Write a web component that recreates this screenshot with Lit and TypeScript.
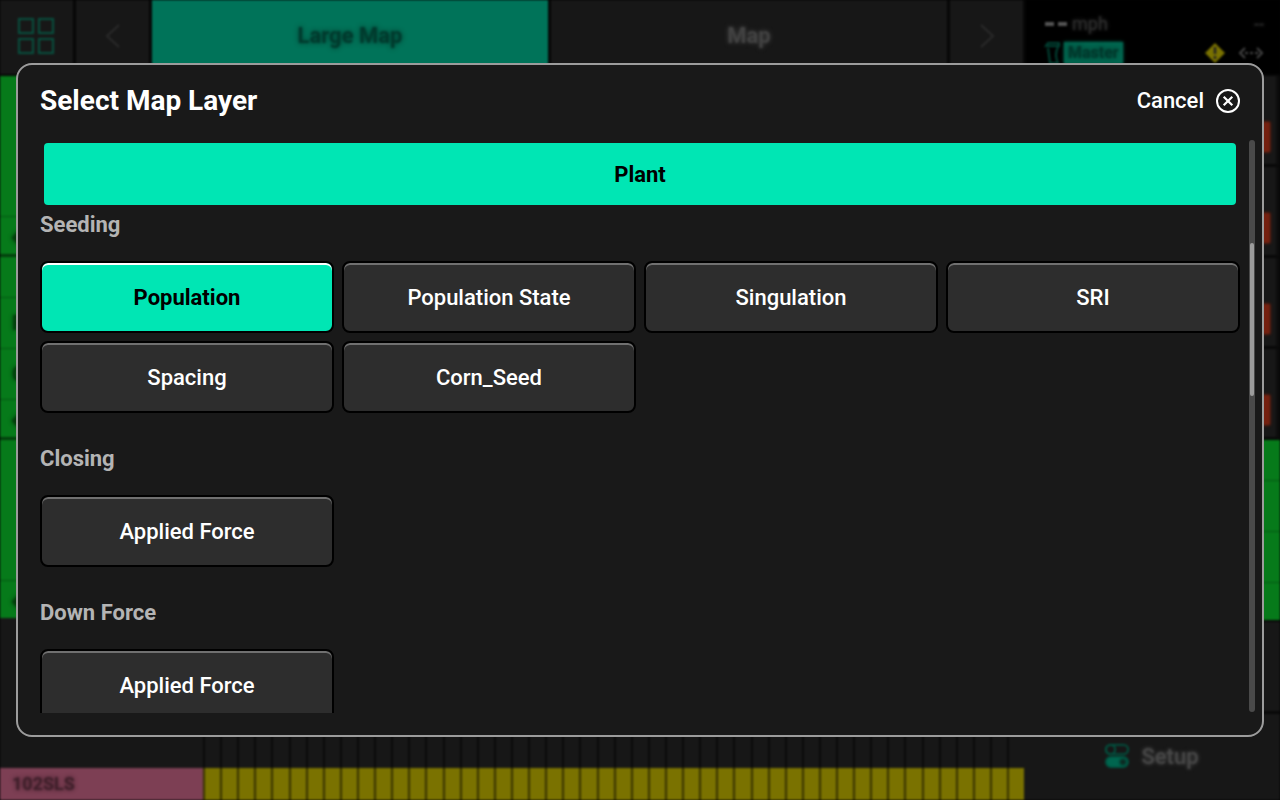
import { LitElement, html, css } from "lit";
import { customElement, state } from "lit/decorators.js";

interface LayerGroup {
  name: string;
  layers: string[];
}

const GROUPS: LayerGroup[] = [
  { name: "Seeding", layers: ["Population", "Population State", "Singulation", "SRI", "Spacing", "Corn_Seed"] },
  { name: "Closing", layers: ["Applied Force"] },
  { name: "Down Force", layers: ["Applied Force"] },
];

const chevron = (points: string) => html`
  <svg width="20" height="28" viewBox="0 0 20 28" fill="none" stroke="#2a2a2a" stroke-width="2">
    <polyline points=${points}></polyline>
  </svg>
`;

@customElement("monitor-backdrop")
export class MonitorBackdrop extends LitElement {
  static styles = css`
    :host {
      display: flex;
      flex-direction: column;
      height: 100%;
      background: #060606;
      color: #3c3c3c;
      filter: blur(1px);
      text-shadow: 0 0 4px currentColor;
    }
    button {
      font: inherit;
      color: inherit;
      text-shadow: inherit;
      border: 0;
      padding: 0;
      margin: 0;
      background: #171717;
    }
    .top {
      display: flex;
      height: 74px;
      gap: 3px;
      margin-bottom: 2px;
    }
    .tabs {
      flex: 1;
      display: flex;
      gap: 3px;
    }
    .square {
      width: 73px;
      padding-bottom: 2px;
      display: grid;
      place-items: center;
    }
    .tab {
      flex: 1;
      font-size: 22px;
      line-height: 26px;
      font-weight: 700;
      color: #424242;
      padding-bottom: 2px;
      text-shadow: 0 0 5px currentColor;
    }
    .tab.on {
      background: #007359;
      color: #003a2d;
    }
    .status {
      width: 254px;
      background: #000;
      box-sizing: border-box;
      padding: 14px 16px 0 18px;
      display: flex;
      flex-direction: column;
      gap: 8px;
    }
    .line {
      display: flex;
      justify-content: space-between;
      align-items: center;
      font-size: 18px;
      line-height: 20px;
      color: #2e2e2e;
    }
    .speed {
      display: flex;
      align-items: center;
      gap: 4px;
    }
    .badge {
      background: #00664f;
      box-shadow: 0 0 3px #00664f;
      color: #00382c;
      font-size: 16px;
      font-weight: 700;
      line-height: 22px;
      padding: 0 4px;
    }
    .marks {
      display: flex;
      align-items: center;
      gap: 12px;
    }
    .middle {
      flex: 1;
      display: flex;
      min-height: 0;
    }
    .field {
      flex: 1;
      display: flex;
      flex-direction: column;
      background: #171717;
    }
    .rail {
      flex: 1;
    }
    .zone {
      background: #067a1a;
      border-bottom: 3px solid #033d0c;
    }
    .zone:last-child {
      border-bottom: 0;
    }
    .cell {
      border-bottom: 1px solid #045612;
      box-sizing: border-box;
      color: #033d0c;
      padding-left: 12px;
      display: flex;
      align-items: center;
      font-size: 20px;
      font-weight: 700;
    }
    .cell:last-child {
      border-bottom: 0;
    }
    .h141 { height: 141px; }
    .h51 { height: 51px; }
    .h41 { height: 41px; }
    .h37 { height: 37px; }
    .strips {
      display: flex;
      height: 80px;
    }
    .hybrid {
      width: 203px;
      display: flex;
      flex-direction: column;
      justify-content: flex-end;
    }
    .tag {
      background: #7d3f54;
      color: #3f1f2a;
      font-size: 18px;
      font-weight: 700;
      line-height: 32px;
      padding-left: 12px;
    }
    .rows {
      flex: 1;
      display: flex;
    }
    .row {
      flex: 1;
      background: linear-gradient(#171717 48px, #7a7200 48px);
      border-left: 2px solid #0000008c;
      background-clip: border-box;
    }
    .side {
      width: 256px;
      display: flex;
      flex-direction: column;
    }
    .gauge {
      height: 91px;
      background: #171717;
      border-bottom: 3px solid #080808;
      border-right: 4px solid #0c0c0c;
      box-sizing: border-box;
      display: flex;
      align-items: flex-end;
      justify-content: flex-end;
      padding: 0 6px 12px 0;
    }
    .bar {
      width: 40px;
      height: 30px;
      background: #74200f;
      box-shadow: 0 0 3px #74200f;
    }
    .blank {
      flex: 1;
      background: #171717;
      border-top: 2px solid #080808;
      border-bottom: 3px solid #080808;
    }
    .setup {
      height: 86px;
      padding-bottom: 2px;
      display: flex;
      align-items: center;
      justify-content: center;
      gap: 12px;
      font-size: 22px;
      font-weight: 500;
      color: #474747;
    }
  `;

  render() {
    return html`
      <div class="top">
        <button class="square" aria-label="Home">
          <svg width="38" height="38" viewBox="0 0 38 38" fill="none" stroke="#07503f" stroke-width="2">
            <rect x="1" y="2" width="14" height="14"></rect>
            <rect x="21" y="2" width="14" height="14"></rect>
            <rect x="1" y="22" width="14" height="14"></rect>
            <rect x="21" y="22" width="14" height="14"></rect>
          </svg>
        </button>
        <button class="square" aria-label="Previous">${chevron("16,3 4,14 16,25")}</button>
        <div class="tabs">
          <button class="tab on">Large Map</button>
          <button class="tab">Map</button>
        </div>
        <button class="square" aria-label="Next">${chevron("4,3 16,14 4,25")}</button>
        <div class="status">
          <div class="line">
            <span class="speed">
              <svg width="24" height="4"><path d="M1 2h9M14 2h9" stroke="#555" stroke-width="4"></path></svg>
              mph
            </span>
            <span>--</span>
          </div>
          <div class="line">
            <span class="speed">
              <svg width="16" height="22" viewBox="0 0 16 22" fill="none" stroke="#004435" stroke-width="2">
                <path d="M1 5l3-4h11v3H3M4 6l2 15h9M14 5q-4 8 0 16"></path>
              </svg>
              <span class="badge">Master</span>
            </span>
            <span class="marks">
              <svg width="22" height="22" viewBox="0 0 22 22">
                <path d="M11 1l10 10-10 10L1 11z" fill="#7a7200"></path>
                <path d="M11 5v7M11 14v3" stroke="#222" stroke-width="2.5"></path>
              </svg>
              <svg width="26" height="14" viewBox="0 0 26 14" fill="none" stroke="#444" stroke-width="2">
                <path d="M7 2L2 7l5 5M19 2l5 5-5 5M7 7h3M12 7h3M17 7h3"></path>
              </svg>
            </span>
          </div>
        </div>
      </div>
      <div class="middle">
        <div class="field">
          <div class="rail">
            <div class="zone">
              <div class="cell h141"></div>
              <div class="cell h37">◆</div>
            </div>
            <div class="zone">
              <div class="cell h41"></div>
              <div class="cell h51">R</div>
              <div class="cell h51">C</div>
              <div class="cell h37">◆</div>
            </div>
            <div class="zone">
              <div class="cell h141"></div>
              <div class="cell h37">◆</div>
            </div>
          </div>
          <div class="strips">
            <div class="hybrid"><div class="tag">102SLS</div></div>
            <div class="rows">${Array.from({ length: 48 }, () => html`<div class="row"></div>`)}</div>
          </div>
        </div>
        <div class="side">
          ${Array.from({ length: 4 }, () => html`<div class="gauge"><div class="bar"></div></div>`)}
          <div>
            <div class="zone">
              <div class="cell h41"></div>
              <div class="cell h51"></div>
              <div class="cell h51"></div>
              <div class="cell h37"></div>
            </div>
          </div>
          <div class="blank"></div>
          <button class="setup">
            <svg width="24" height="24" viewBox="0 0 26 26" fill="none" stroke="#005441" stroke-width="2">
              <rect x="1" y="1" width="24" height="10" rx="5"></rect>
              <circle cx="6" cy="6" r="5"></circle>
              <rect x="1" y="14" width="24" height="11" rx="5.5" fill="#00664f"></rect>
              <circle cx="19.5" cy="19.5" r="4" fill="#0d2a23"></circle>
            </svg>
            Setup
          </button>
        </div>
      </div>
    `;
  }
}

@customElement("layer-dialog")
export class LayerDialog extends LitElement {
  @state() private selected = "Seeding/Population";

  static styles = css`
    :host {
      display: flex;
      flex-direction: column;
      box-sizing: border-box;
      background: #191919;
      border: 2px solid #9c9c9c;
      border-radius: 16px;
      padding-bottom: 22px;
      color: #fff;
    }
    button {
      font: inherit;
      color: inherit;
      margin: 0;
      padding: 0;
      cursor: pointer;
    }
    .head {
      height: 72px;
      display: flex;
      align-items: center;
      justify-content: space-between;
      padding: 0 22px;
    }
    .title {
      margin: 0;
      font-size: 28px;
      line-height: 34px;
      font-weight: 700;
    }
    .cancel {
      display: flex;
      align-items: center;
      gap: 12px;
      border: 0;
      background: none;
      font-size: 22px;
      line-height: 26px;
      font-weight: 500;
    }
    .body {
      flex: 1;
      min-height: 0;
      display: flex;
      gap: 9px;
      padding: 0 7px 0 22px;
    }
    .list {
      flex: 1;
      overflow-y: auto;
      scrollbar-width: none;
      padding-top: 6px;
    }
    .track {
      width: 6px;
      margin: 3px 0 1px;
      border-radius: 3px;
      background: #4a4a4a;
      box-sizing: border-box;
      padding: 103px 1px 0;
    }
    .thumb {
      height: 153px;
      border-radius: 2px;
      background: #9c9c9c;
    }
    .banner {
      margin: 0 4px 6px;
      padding-top: 2px;
      border-radius: 4px;
      background: #00e6b4;
      color: #000;
      text-align: center;
      font-size: 22px;
      line-height: 60px;
      font-weight: 700;
    }
    .group {
      margin-bottom: 32px;
    }
    .name {
      margin: 0 0 22px;
      font-size: 22px;
      line-height: 28px;
      font-weight: 700;
      color: #b4b4b4;
    }
    .grid {
      display: grid;
      grid-template-columns: repeat(4, 1fr);
      gap: 8px;
    }
    .layer {
      height: 72px;
      padding-top: 1px;
      border: 2px solid #000;
      border-radius: 8px;
      background: #2d2d2d;
      box-shadow: inset 0 2px 0 #707070;
      font-size: 22px;
      line-height: 26px;
      font-weight: 500;
    }
    .layer.on {
      background: #00e6b4;
      box-shadow: inset 0 2px 0 #fff;
      color: #000;
      font-weight: 700;
    }
  `;

  render() {
    return html`
      <header class="head">
        <h1 class="title">Select Map Layer</h1>
        <button class="cancel">
          Cancel
          <svg width="24" height="24" viewBox="0 0 24 24" fill="none" stroke="#fff" stroke-width="2">
            <circle cx="12" cy="12" r="11"></circle>
            <path d="M7.7 7.7l8.6 8.6M16.3 7.7l-8.6 8.6" stroke-width="2.2"></path>
          </svg>
        </button>
      </header>
      <div class="body">
        <div class="list">
          <div class="banner">Plant</div>
          ${GROUPS.map(
            (group) => html`
              <section class="group">
                <h2 class="name">${group.name}</h2>
                <div class="grid">
                  ${group.layers.map((layer) => {
                    const key = `${group.name}/${layer}`;
                    const on = key === this.selected;
                    return html`<button
                      class=${on ? "layer on" : "layer"}
                      aria-pressed=${on ? "true" : "false"}
                      @click=${() => (this.selected = key)}
                    >
                      ${layer}
                    </button>`;
                  })}
                </div>
              </section>
            `
          )}
        </div>
        <div class="track"><div class="thumb"></div></div>
      </div>
    `;
  }
}

@customElement("app-root")
export class AppRoot extends LitElement {
  static styles = css`
    :host {
      display: block;
      position: relative;
      height: 100vh;
      overflow: hidden;
      background: #040404;
      font-family: Roboto, "Liberation Sans", sans-serif;
    }
    .dialog {
      position: absolute;
      inset: 63px 16px;
    }
  `;

  render() {
    return html`
      <monitor-backdrop aria-hidden="true"></monitor-backdrop>
      <layer-dialog class="dialog" role="dialog" aria-label="Select Map Layer"></layer-dialog>
    `;
  }
}
